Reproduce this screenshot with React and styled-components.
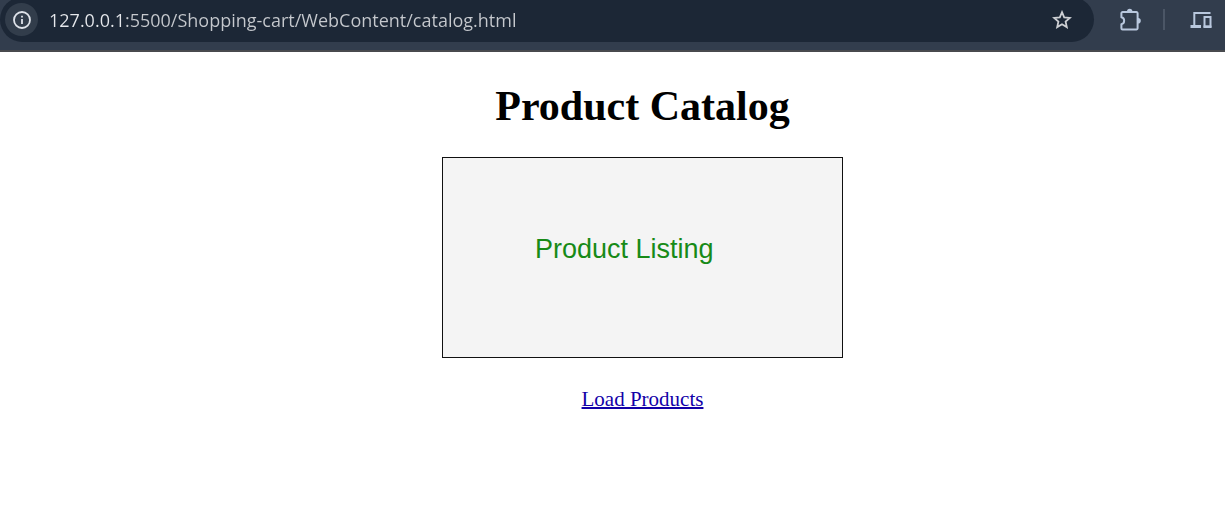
import React from "react";
import styled, { createGlobalStyle } from "styled-components";

const GlobalStyle = createGlobalStyle`
  * { box-sizing: border-box; }
  body {
    margin: 0;
    background: #fff;
    color: #000;
    font-family: "Liberation Serif", "Times New Roman", serif;
  }
`;

const Toolbar = styled.header`
  display: flex;
  align-items: flex-start;
  height: 52px;
  overflow: hidden;
  background: #323d4d;
  border-bottom: 2px solid #484a4e;
`;

const AddressBar = styled.div`
  display: flex;
  flex: 1;
  align-items: center;
  height: 45px;
  margin-top: -3px;
  padding: 0 20px 0 5px;
  border-radius: 23px;
  background: #1c2736;
`;

const IconButton = styled.button`
  display: flex;
  flex: none;
  align-items: center;
  justify-content: center;
  width: ${(p) => p.$size}px;
  height: ${(p) => p.$size}px;
  padding: 0;
  border: 0;
  border-radius: 50%;
  background: ${(p) => (p.$filled ? "#323d4b" : "transparent")};
  color: ${(p) => p.$color || "#b9c8de"};
`;

/* The host is drawn brighter than the path that follows it. */
const UrlField = styled.input`
  flex: 1;
  min-width: 0;
  height: 32px;
  margin: 0 0 0 11px;
  padding: 0;
  border: 0;
  outline: 0;
  background: linear-gradient(to right, #e6e8ec 74px, #c6c9ce 74px);
  background-clip: text;
  -webkit-background-clip: text;
  color: transparent;
  caret-color: #e6e8ec;
  font: 18px/24px "Open Sans", "Noto Sans", sans-serif;
`;

const Actions = styled.div`
  display: flex;
  align-items: center;
  height: 39px;
  padding: 0 12px 0 24px;
`;

const Divider = styled.span`
  width: 2px;
  height: 21px;
  margin: 0 24px 0 21px;
  background: #4b5666;
`;

const Page = styled.main`
  display: flex;
  flex-direction: column;
  align-items: center;
  padding: 30px 0 0 60px;
`;

const Title = styled.h1`
  margin: 0;
  font-size: 42px;
  line-height: 48px;
`;

const Listing = styled.section`
  display: flex;
  align-items: center;
  width: 401px;
  max-width: 100%;
  height: 201px;
  margin: 27px 0 28px;
  padding: 0 20px 18px 92px;
  border: 1px solid #111;
  background: #f4f4f4;
`;

const ListingLabel = styled.p`
  margin: 0;
  color: #178a17;
  font: 27px/32px "Liberation Sans", Arial, sans-serif;
  white-space: nowrap;
`;

const LoadLink = styled.a`
  color: #1200a8;
  font-size: 21px;
  line-height: 26px;
  text-decoration-thickness: 2px;
`;

const InfoIcon = () => (
  <svg width="18" height="18" viewBox="0 0 18 18" fill="none" stroke="currentColor" strokeWidth="1.8">
    <circle cx="9" cy="9" r="8" />
    <path d="M9 8v5M9 4.8v1.8" />
  </svg>
);

const StarIcon = () => (
  <svg width="20" height="20" viewBox="0 0 20 20" fill="none" stroke="currentColor" strokeWidth="1.8">
    <path d="M10 2.2l2.2 5.2 5.6.5-4.2 3.7 1.2 5.5-4.8-2.9-4.8 2.9 1.2-5.5L2.2 7.9l5.6-.5z" />
  </svg>
);

const ExtensionsIcon = () => (
  <svg width="24" height="24" viewBox="0 0 24 24">
    <path
      d="M4.6 4H18.4a1.2 1.2 0 0 1 1.2 1.2V20.3a1.2 1.2 0 0 1-1.2 1.2H4.6a1.2 1.2 0 0 1-1.2-1.2V16.2a3.6 3.6 0 0 0 0-7V5.2A1.2 1.2 0 0 1 4.6 4z"
      fill="none"
      stroke="currentColor"
      strokeWidth="2"
      strokeLinejoin="round"
    />
    <path d="M9 3.5a2.7 2.7 0 0 1 5.4 0zM20 10a2.8 2.8 0 0 1 0 5.6z" fill="currentColor" />
  </svg>
);

const DevicesIcon = () => (
  <svg width="22" height="18" viewBox="0 0 22 18" fill="none" stroke="currentColor" strokeWidth="2">
    <path d="M4.3 15V2h16.2" />
    <path d="M.5 15.5h10.5" strokeWidth="3" />
    <path d="M14.5 6h6v9.5h-6z" />
    <path d="M13.5 15.8h8" strokeWidth="2.4" />
  </svg>
);

export default function App() {
  return (
    <>
      <GlobalStyle />
      <Toolbar>
        <AddressBar>
          <IconButton $size={33} $filled $color="#dfe3ea" aria-label="View site information">
            <InfoIcon />
          </IconButton>
          <UrlField
            aria-label="Address"
            defaultValue="127.0.0.1:5500/Shopping-cart/WebContent/catalog.html"
          />
          <IconButton $size={24} $color="#ced0d4" aria-label="Bookmark this page">
            <StarIcon />
          </IconButton>
        </AddressBar>
        <Actions>
          <IconButton $size={24} aria-label="Extensions">
            <ExtensionsIcon />
          </IconButton>
          <Divider />
          <IconButton $size={24} aria-label="Devices">
            <DevicesIcon />
          </IconButton>
        </Actions>
      </Toolbar>
      <Page>
        <Title>Product Catalog</Title>
        <Listing>
          <ListingLabel>Product Listing</ListingLabel>
        </Listing>
        <LoadLink href="#products">Load Products</LoadLink>
      </Page>
    </>
  );
}
